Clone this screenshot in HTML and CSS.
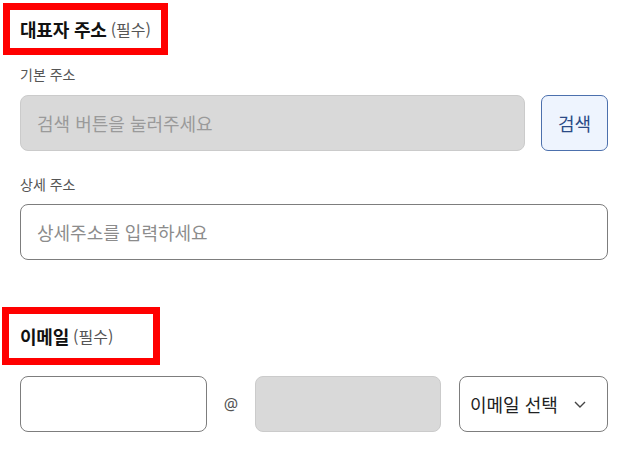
FILE: index.html
```html
<!DOCTYPE html>
<html lang="ko">
<head>
<meta charset="utf-8">
<link rel="stylesheet" href="styles.css">
</head>
<body>
<div class="page">
  <div class="section-title title-address"><strong>대표자 주소</strong><span class="req">(필수)</span></div>
  <div class="label label-first">기본 주소</div>
  <div class="row">
    <div class="field field-disabled grow">검색 버튼을 눌러주세요</div>
    <button class="btn-search" type="button">검색</button>
  </div>
  <div class="label label-second">상세 주소</div>
  <div class="field field-white">상세주소를 입력하세요</div>

  <div class="section-title title-email"><strong>이메일</strong><span class="req">(필수)</span></div>
  <div class="email-row">
    <div class="field field-white email-id"></div>
    <div class="at">@</div>
    <div class="field field-disabled email-domain"></div>
    <div class="select">
      <span>이메일 선택</span>
      <svg class="chev" width="12" height="7" viewBox="0 0 12 7"><path d="M1 1 L6 6 L11 1" fill="none" stroke="#444" stroke-width="1.4"/></svg>
    </div>
  </div>
</div>
</body>
</html>
```

FILE: styles.css
```css
* { box-sizing: border-box; }
html, body { margin: 0; padding: 0; background: #fff; }
body {
  font-family: "Noto Sans CJK KR", "Noto Sans", sans-serif;
  color: #222;
}
.page {
  width: 635px;
  padding: 3px 27px 0 20px;
}
.section-title {
  display: flex;
  align-items: center;
  width: fit-content;
  border: 7px solid #ff0000;
  line-height: 22px;
}
.section-title strong {
  font-size: 18px;
  font-weight: 700;
  color: #111;
  letter-spacing: -0.2px;
}
.section-title .req {
  font-size: 16px;
  color: #555;
  margin-left: 4px;
}
.title-address {
  margin-left: -17px;
  height: 52px;
  padding: 0 10px 0 10px;
}
.title-email {
  margin-left: -18px;
  margin-top: 47px;
  height: 58px;
  padding: 0 40px 0 11px;
}
.label {
  font-size: 14px;
  color: #555;
  line-height: 20px;
  height: 20px;
}
.label-first { margin-top: 9px; margin-bottom: 11px; }
.label-second { margin-top: 23px; margin-bottom: 10px; }
.row {
  display: flex;
  gap: 16px;
}
.grow { flex: 1; }
.field {
  height: 56px;
  border-radius: 8px;
  font-size: 18px;
  display: flex;
  align-items: center;
  padding-left: 16px;
  line-height: 22px;
}
.field-disabled {
  background: #d9d9d9;
  border: 1px solid #cbcbcb;
  color: #9a9a9a;
}
.field-white {
  background: #fff;
  border: 1px solid #7d7d7d;
  color: #8c8c8c;
}
.btn-search {
  width: 67px;
  height: 56px;
  border: 1px solid #4c70ad;
  background: #eef4fe;
  border-radius: 7px;
  color: #2a4a86;
  font-family: inherit;
  font-size: 18px;
  padding: 0;
}
.email-row {
  display: flex;
  align-items: center;
  margin-top: 11px;
}
.email-id { width: 187px; }
.at {
  width: 48px;
  text-align: center;
  font-size: 16px;
  color: #555;
  font-family: "Noto Sans", sans-serif;
}
.email-domain { width: 186px; }
.select {
  margin-left: auto;
  width: 149px;
  height: 56px;
  border: 1px solid #7d7d7d;
  border-radius: 8px;
  display: flex;
  align-items: center;
  justify-content: space-between;
  padding: 0 21px 0 10px;
  font-size: 18px;
  color: #222;
}
.chev { display: block; }
```
